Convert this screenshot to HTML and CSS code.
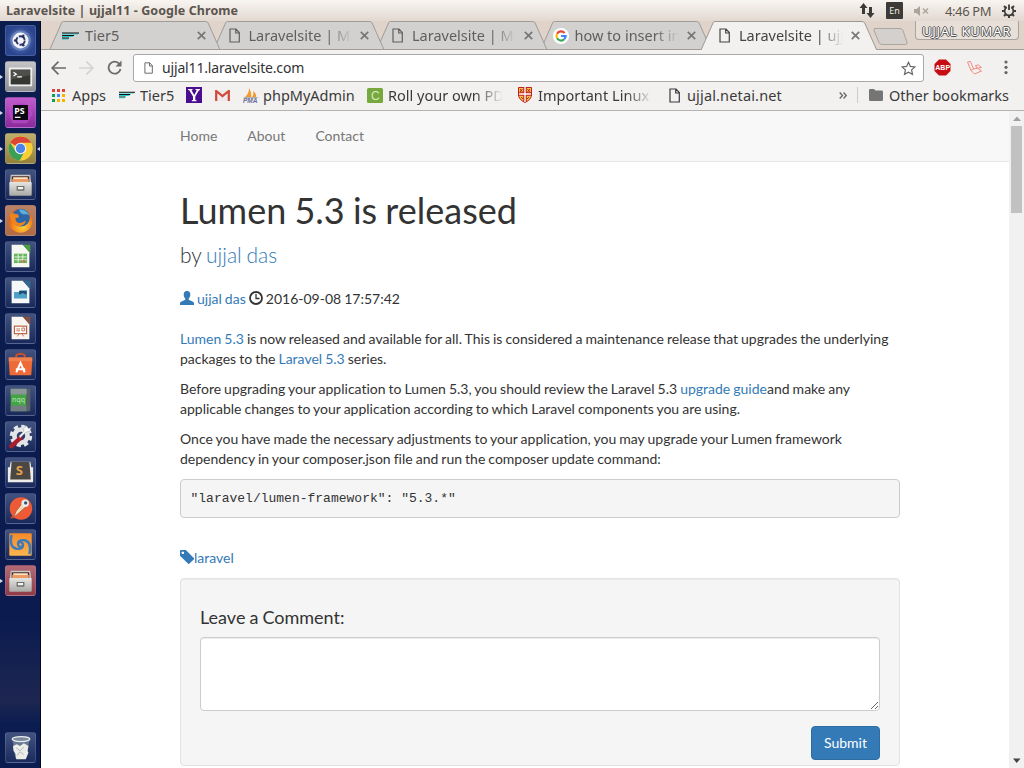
FILE: index.html
```html
<!DOCTYPE html>
<html lang="en">
<head>
<meta charset="utf-8">
<title>Laravelsite | ujjal11</title>
<link rel="stylesheet" href="styles.css">
</head>
<body>
<svg class="defs" width="0" height="0">
  <defs>
    <linearGradient id="steel" x1="0" y1="0" x2="0" y2="1"><stop offset="0" stop-color="#e4e4e2"/><stop offset="1" stop-color="#a9a9a6"/></linearGradient>
    <linearGradient id="sun" x1="0" y1="0" x2="0" y2="1"><stop offset="0" stop-color="#f58a2a"/><stop offset="1" stop-color="#fbb54e"/></linearGradient>
    <radialGradient id="fox" cx=".6" cy=".75" r=".8"><stop offset="0" stop-color="#ffd23a"/><stop offset=".5" stop-color="#f78a1c"/><stop offset="1" stop-color="#d8481a"/></radialGradient>
    <radialGradient id="neon"><stop offset="0" stop-color="#5a49e8"/><stop offset=".6" stop-color="#a32fd0"/><stop offset="1" stop-color="#c05cc4" stop-opacity=".5"/></radialGradient>
  </defs>
  <symbol id="doc" viewBox="0 0 11 15"><path d="M1 1h6l3.300 3.500V14H1zM6.700 1v4h3.600" fill="none" stroke="currentColor" stroke-width="1.200"/></symbol>
  <symbol id="tier" viewBox="0 0 17 8"><path d="M0 1.500h17l-1.500 1H0zM0 4h12l-2 1H0zM0 6.500h7l-1 1H0z" fill="#20cfd6"/><path d="M0 .5h17v1H0zM0 3h12v1H0zM0 5.500h7v1H0z" fill="#111"/></symbol>
  <symbol id="cross" viewBox="0 0 8 8"><path d="M.7.7l6.600 6.600M7.300.7L.7 7.300" stroke="currentColor" stroke-width="1.500"/></symbol>
  <symbol id="cabinet" viewBox="0 0 24 24"><path d="M2 1.500h20l1 9H1z" fill="#c9c8c6"/><path d="M3 3h18v7H3z" fill="#4d2e22"/><path d="M4.500 4h15v2h-15z" fill="#fbe3c8"/><path d="M3.500 6h17v3.500h-17z" fill="#ee9a63"/><rect x=".5" y="9" width="23" height="14" rx="1" fill="url(#steel)"/><rect x="8" y="13" width="8" height="5" rx=".5" fill="#6e6e6e"/><path d="M9.300 14.200h5.400v2.300H9.300z" fill="#f4f4f4"/></symbol>
</svg>
<div class="desktop">
  <header class="panel">
    <span class="panel-title">Laravelsite | ujjal11 - Google Chrome</span>
    <div class="indicators">
      <svg class="i-net" width="16" height="15" viewBox="0 0 16 15"><path d="M4.500 0L8.500 5H6v6H3V5H.5zM11.500 15l-4-5H10V4h3v6h2.500z" fill="#3c3b37"/></svg>
      <span class="i-lang">En</span>
      <svg class="i-sound" width="15" height="12" viewBox="0 0 15 12"><path d="M0 4h2.500L6 1v10L2.500 8H0z" fill="#aaa49b"/><path d="M9 3.500l5 5m0-5l-5 5" stroke="#aaa49b" stroke-width="1.400"/></svg>
      <span class="i-clock">4:46 PM</span>
      <svg class="i-gear" width="14" height="14" viewBox="0 0 14 14"><g stroke="#3c3b37" fill="none"><path d="M4.800 3.200a4.400 4.400 0 1 0 4.400 0" stroke-width="1.700"/><path d="M7 .5v5.500" stroke-width="1.800"/><path d="M0 7h2.500m9 0H14M7 11.500V14M2 2l1.800 1.800M12 2l-1.800 1.800M2 12l1.800-1.800M12 12l-1.800-1.800" stroke-width="2"/></g></svg>
    </div>
  </header>
  <div class="workspace">
    <aside class="launcher">
      <div class="tile t-dash"><svg viewBox="0 0 31 31"><circle cx="15.500" cy="15.500" r="11" fill="#8fa5d5" opacity=".5"/><circle cx="15.500" cy="15.500" r="8.500" fill="#f2f4fa"/><circle cx="15.500" cy="15.500" r="4.500" fill="none" stroke="#26315f" stroke-width="2" stroke-dasharray="8 1.400"/><circle cx="9.800" cy="15.500" r="1.300" fill="#26315f"/><circle cx="18.500" cy="10.500" r="1.300" fill="#26315f"/><circle cx="18.500" cy="20.500" r="1.300" fill="#26315f"/></svg></div>
      <div class="tile t-term run"><svg viewBox="0 0 31 31"><rect x="3" y="6" width="25" height="20" rx="1" fill="#eee"/><rect x="5" y="8" width="21" height="16" fill="#363632"/><path d="M5 8h21v6L5 19z" fill="#fff" opacity=".12"/><path d="M8 11l3 2-3 2M12 16h5" stroke="#fff" stroke-width="1.300" fill="none"/></svg></div>
      <div class="tile t-storm run"><svg viewBox="0 0 31 31"><path d="M5 6l20-2 3 14-6 9H7L3 16z" fill="url(#neon)"/><rect x="7.500" y="7.500" width="16" height="16" fill="#0b0710"/><text x="8.800" y="17" class="svg-ps">PS</text><path d="M9.500 20h6v1.300h-6z" fill="#fff"/></svg></div>
      <div class="tile t-chrome run focus"><svg viewBox="0 0 31 31"><circle cx="15.500" cy="15.500" r="13" fill="#f7cf35"/><path d="M15.500 15.500L4.300 9A13 13 0 0 1 26.900 9.300H15.500z" fill="#dc4637"/><path d="M4.300 9A13 13 0 0 0 14.500 28.500l5.500-10-10-.5z" fill="#3c9f57"/><circle cx="15.500" cy="15.500" r="6.200" fill="#f5f5f5"/><circle cx="15.500" cy="15.500" r="5" fill="#4a84e8"/></svg></div>
      <div class="tile"><svg viewBox="0 0 31 31"><use href="#cabinet" x="3" y="3.500" width="25" height="25"/></svg></div>
      <div class="tile t-fox run"><svg viewBox="0 0 31 31"><circle cx="15.500" cy="16" r="12.500" fill="url(#fox)"/><circle cx="16" cy="12.500" r="9.500" fill="#2c66a8"/><path d="M14 4c5-1 9 2 11 6-3-2-4-1-6-1s-4-2-5-5z" fill="#5ab0dc"/><path d="M4 9l3-2c1 2 3 1 6 2l1 3-4 1c0 4 3 6 6 5 2 0 3-2 5-2-1 5-7 7-11 4C6 18 4 14 4 9z" fill="#f0831d"/></svg></div>
      <div class="tile"><svg viewBox="0 0 31 31"><path d="M6 3h12l7 8v16H6z" fill="#f5f7f1"/><path d="M18 3h8v9z" fill="#4aa042"/><rect x="8.500" y="12.500" width="14" height="10" fill="#68b55c"/><path d="M9 16h13M9 19h13M13 13v9M18 13v9" stroke="#e9f6e4"/><path d="M16 22v-2h2v-1h2v3z" fill="#bd7d4b"/></svg></div>
      <div class="tile"><svg viewBox="0 0 31 31"><path d="M6 3h12l7 8v16H6z" fill="#f5f7f8"/><path d="M18 3h8v9z" fill="#326990"/><path d="M8.500 15h6v-2h8v9h-14z" fill="#4ea2c8"/><path d="M14 14h8v4l-4-2-4 2z" fill="#204f70"/></svg></div>
      <div class="tile"><svg viewBox="0 0 31 31"><path d="M6 3h12l7 8v16H6z" fill="#f8f4ef"/><path d="M18 3h8v9z" fill="#875142"/><rect x="9" y="13" width="13" height="8" fill="#fff" stroke="#bc6546" stroke-width="1.300"/><path d="M11 16h4m-4 2h4m2-3h3v3h-3zM14 21l-2 3m5-3l2 3" stroke="#bd7359" fill="none"/></svg></div>
      <div class="tile"><svg viewBox="0 0 31 31"><path d="M11 8V5.500q4.500-3 9 0V8" stroke="#cd502b" stroke-width="2" fill="none"/><path d="M3 8h25v4l-1 15H4L3 12z" fill="#ee6a36"/><path d="M3 8h25v4H3z" fill="#f28150"/><path d="M11 24l4.500-10L20 24M10.500 20.500h10" stroke="#fff" stroke-width="2.200" fill="none"/></svg></div>
      <div class="tile"><svg viewBox="0 0 31 31"><path d="M5 3h17v24H5z" fill="#45a246"/><path d="M22 3h4v24h-4z" fill="#56616a"/><path d="M5 3h17v6H5z" fill="#8d9699"/><path d="M5 21h17v6H5z" fill="#727c82"/><text x="6.500" y="17" class="svg-nqq">nqq</text></svg></div>
      <div class="tile"><svg viewBox="0 0 31 31"><circle cx="16" cy="15" r="10" fill="none" stroke="#e4e6e8" stroke-width="4" stroke-dasharray="4.500 3.350"/><circle cx="16" cy="15" r="7" fill="none" stroke="#e2e4e6" stroke-width="5"/><path d="M5.500 26l10-9" stroke="#ad1e2d" stroke-width="4.500" stroke-linecap="round"/><path d="M15 17l6-6 4-1 2-4-3 1-2-3-3 3v3l-5 5z" fill="#f6f7f7" stroke="#999" stroke-width=".5"/></svg></div>
      <div class="tile"><svg viewBox="0 0 31 31"><path d="M2 10h2l1-6h21l1 6h2v16H2z" fill="#ecebe8"/><path d="M6 4h19l1.500 19h-22z" fill="#4b4742"/><text x="10.500" y="18" class="svg-s">S</text></svg></div>
      <div class="tile"><svg viewBox="0 0 31 31"><circle cx="16" cy="15.500" r="12" fill="#ee5a35"/><path d="M4 26l3-3 2 3z" fill="#d5442a"/><path d="M8 25l3-7 7-9 4 4-9 8z" fill="#f1d8b6" stroke="#a9502e" stroke-width=".8"/><circle cx="20.500" cy="10" r="4" fill="#e6efee"/><circle cx="21" cy="9.500" r="1.800" fill="#38556e"/></svg></div>
      <div class="tile"><svg viewBox="0 0 31 31"><rect x="3.500" y="3.500" width="24" height="24" rx="1" fill="url(#sun)"/><g fill="none" stroke="#3f7bb9" stroke-width="2.600"><path d="M6 5q-3 13 5 15 8 1 7-5-2-4-5-1"/><path d="M25 26q3-13-5-15-8-1-7 5 2 4 5 1"/></g></svg></div>
      <div class="tile t-red run"><svg viewBox="0 0 31 31"><use href="#cabinet" x="3" y="3.500" width="25" height="25"/></svg></div>
      <div class="tile t-trash"><svg viewBox="0 0 31 31"><path d="M7 7h18l-3 20H10z" fill="#77869a" opacity=".8"/><ellipse cx="16" cy="6.500" rx="9.500" ry="2.700" fill="#7b8999" stroke="#e9edf0" stroke-width="1.300"/><path d="M7.500 14l4-2 3.500 2 4-3 5 3-1 5 1 2-3 7H11l-1-6-2-3z" fill="#ecede9"/><path d="M11 16l4 3 4-4m-7 9l3-4 4 3" stroke="#b2b6b3" fill="none"/></svg></div>
    </aside>
    <main class="browser">
      <div class="tabstrip">
        <div class="tab z4"><svg class="tab-bg" viewBox="0 0 176 29"><path d="M0 29L12 2q.5-1.500 2-1.500h147q2 0 2.700 1.500l12 27"/></svg><svg class="fav-t" width="17" height="8"><use href="#tier"/></svg><span class="tab-text">Tier5</span><svg class="close" width="9" height="9"><use href="#cross"/></svg></div>
        <div class="tab z3"><svg class="tab-bg" viewBox="0 0 176 29"><path d="M0 29L12 2q.5-1.500 2-1.500h147q2 0 2.700 1.500l12 27"/></svg><svg class="fav-d" width="11" height="15"><use href="#doc"/></svg><span class="tab-text fade">Laravelsite | Ma</span><svg class="close" width="9" height="9"><use href="#cross"/></svg></div>
        <div class="tab z2"><svg class="tab-bg" viewBox="0 0 176 29"><path d="M0 29L12 2q.5-1.500 2-1.500h147q2 0 2.700 1.500l12 27"/></svg><svg class="fav-d" width="11" height="15"><use href="#doc"/></svg><span class="tab-text fade">Laravelsite | Ma</span><svg class="close" width="9" height="9"><use href="#cross"/></svg></div>
        <div class="tab z1"><svg class="tab-bg" viewBox="0 0 176 29"><path d="M0 29L12 2q.5-1.500 2-1.500h147q2 0 2.700 1.500l12 27"/></svg><svg class="fav-g" width="16" height="16" viewBox="0 0 16 16"><circle cx="8" cy="8" r="8" fill="#fff"/><g fill="none" stroke-width="2.200"><path d="M4.100 5.700A4.600 4.600 0 0 1 11.500 5" stroke="#ea4335"/><path d="M4.100 10.300a4.600 4.600 0 0 1 0-4.600" stroke="#fbbc05"/><path d="M11.200 11.300a4.600 4.600 0 0 1-7.100-1" stroke="#34a853"/><path d="M8 8h4.600a4.600 4.600 0 0 1-1.400 3.300" stroke="#4285f4"/></g></svg><span class="tab-text fade">how to insert in</span><svg class="close" width="9" height="9"><use href="#cross"/></svg></div>
        <div class="tab active"><svg class="tab-bg" viewBox="0 0 176 29"><path d="M0 29L12 2q.5-1.500 2-1.500h147q2 0 2.700 1.500l12 27"/></svg><svg class="fav-d" width="11" height="15"><use href="#doc"/></svg><span class="tab-text fade">Laravelsite | ujj</span><svg class="close" width="9" height="9"><use href="#cross"/></svg></div>
        <svg class="newtab" width="35" height="17" viewBox="0 0 35 17"><path d="M2 .5h25q2 0 3 2l4 12q.5 2-1.500 2H9q-2 0-3-2L1 2.500Q.500.5 2 .5z" fill="#d3d0cd" stroke="#aaa5a0"/></svg>
        <span class="profile">UJJAL KUMAR</span>
      </div>
      <div class="toolbar">
        <svg class="nav-ic" width="15" height="14" viewBox="0 0 15 14"><path d="M7.500.7L1.200 7l6.300 6.300M1.200 7H15" fill="none" stroke="#6b6b6b" stroke-width="1.700"/></svg>
        <svg class="nav-ic" width="15" height="14" viewBox="0 0 15 14"><path d="M7.500.7L13.800 7l-6.300 6.300M13.800 7H0" fill="none" stroke="#d3d3d3" stroke-width="1.700"/></svg>
        <svg class="nav-ic" width="15" height="15" viewBox="0 0 15 15"><path d="M12.400 4A6 6 0 1 0 13.500 9" fill="none" stroke="#6b6b6b" stroke-width="1.800"/><path d="M14.500.5v6H8.500z" fill="#6b6b6b"/></svg>
        <div class="omnibox"><svg class="omni-doc" width="9" height="12"><use href="#doc"/></svg><span class="url">ujjal11.laravelsite.com</span><svg class="star" width="15" height="15" viewBox="0 0 15 15"><path d="M7.500 1.300l1.900 4.100 4.500.5-3.300 3 .9 4.500-4-2.200-4 2.200.9-4.500-3.300-3 4.500-.5z" fill="none" stroke="#666" stroke-width="1.200"/></svg></div>
        <svg class="abp" width="17" height="17" viewBox="0 0 17 17"><path d="M5 .5h7l4.500 4.500v7L12 16.500H5L.5 12V5z" fill="#c70d12"/><text x="1.300" y="11.300" class="svg-abp">ABP</text></svg>
        <svg class="lara" width="17" height="14" viewBox="0 0 17 14"><path d="M1.500 1l3-.6L7.500 8 5 9.500zM5 9.500L8.500 13 15.500 10M7.500 8l4-.8 4 2.800M11 7.200L9.500 4.500l3-.5 3 2.500-4 .7" fill="none" stroke="#f28a80"/></svg>
        <svg class="menu" width="4" height="15" viewBox="0 0 4 15"><g fill="#666"><circle cx="2" cy="2" r="1.600"/><circle cx="2" cy="7.300" r="1.600"/><circle cx="2" cy="12.600" r="1.600"/></g></svg>
      </div>
      <div class="bookmarks">
        <svg class="b-apps" width="13" height="13" viewBox="0 0 13 13"><path d="M0 0h3v3H0zM5 0h3v3H5zM10 0h3v3h-3z" fill="#db4437"/><path d="M0 5h3v3H0z" fill="#0f9d58"/><path d="M5 5h3v3H5z" fill="#4285f4"/><path d="M10 5h3v3h-3zM5 10h3v3H5zM10 10h3v3h-3z" fill="#f4b400"/><path d="M0 10h3v3H0z" fill="#0f9d58"/></svg>
        <span class="bm w-apps">Apps</span>
        <svg class="b-tier" width="16" height="8"><use href="#tier"/></svg>
        <span class="bm w-tier">Tier5</span>
        <svg class="b-y" width="16" height="16" viewBox="0 0 16 16"><path d="M0 0h16v16H0z" fill="#4a0c90"/><path d="M2 2h4.500v1l-1 .2L8.300 8l2.500-4.800L9.500 3V2H14v1l-1.200.4L9.300 9.500V13l1.200.3v.9H5.800v-.9L7 13V9.500L3.200 3.300 2 3z" fill="#fff"/></svg>
        <svg class="b-mail" width="15" height="11" viewBox="0 0 15 11"><path d="M0 0h15v11H0z" fill="#eceaea"/><path d="M1.200 11V1l6.300 5 6.300-5v10" fill="none" stroke="#d14836" stroke-width="2.200"/></svg>
        <svg class="b-pma" width="16" height="15" viewBox="0 0 16 15"><path d="M6 0q3 5 2 9H2q4-3 4-9zM10 3q4 3 3 6H9q2-2 1-6z" fill="#f29b2c"/><path d="M0 9.500h16l-3 .8H3z" fill="#777"/><text x="0" y="15" class="svg-pma">PMA</text></svg>
        <span class="bm w-php">phpMyAdmin</span>
        <svg class="b-c" width="16" height="15" viewBox="0 0 16 15"><rect width="16" height="15" rx="1.500" fill="#76a83d"/><text x="4" y="12" class="svg-c">C</text></svg>
        <span class="bm w-roll fade">Roll your own PD</span>
        <svg class="b-shield" width="14" height="16" viewBox="0 0 14 16"><path d="M.5.5h13v7q0 5-6.500 8Q.5 12.500.5 7.500z" fill="#f5c842" stroke="#c02020"/><path d="M7 0v15M0 7h14" stroke="#c02020" stroke-width="3.500"/><path d="M7 0v15M1 7h12" stroke="#fff" stroke-width="1.400"/><path d="M2 2l2.500 3M4.500 2L2 5m7.500-3L12 5m0-3L9.500 5M3 10l2 2m6-2l-2 2" stroke="#c02020"/></svg>
        <span class="bm w-linux fade">Important Linux</span>
        <svg class="b-doc" width="11" height="15"><use href="#doc"/></svg>
        <span class="bm w-net">ujjal.netai.net</span>
        <svg class="b-more" width="8" height="7" viewBox="0 0 8 7"><path d="M.7.500l2.800 3-2.800 3M4.500.500l2.800 3-2.800 3" fill="none" stroke="#666" stroke-width="1.300"/></svg>
        <i class="b-sep"></i>
        <svg class="b-folder" width="14" height="12" viewBox="0 0 14 12"><path d="M0 1.300Q0 0 1.300 0H5l1.500 1.600h6.200Q14 1.600 14 3v7.700q0 1.300-1.300 1.300H1.300Q0 12 0 10.700z" fill="#757575"/></svg>
        <span class="bm w-other">Other bookmarks</span>
      </div>
      <div class="viewport">
        <div class="page">
          <nav class="navbar"><div class="container nav-links"><a>Home</a><a>About</a><a>Contact</a></div></nav>
          <article class="container post">
            <h1>Lumen 5.3 is released</h1>
            <p class="lead">by <a>ujjal das</a></p>
            <p class="meta"><a><svg class="glyph g-user" width="14" height="14" viewBox="0 0 14 14"><path d="M7 0c2.300 0 3.500 1.500 3.300 3.800-.1 1.900-.8 3-1.600 4v1l4.300 2c.7.400 1 1 1 2V14H0v-1.200c0-1 .3-1.600 1-2l4.300-2v-1c-.8-1-1.500-2.100-1.600-4C3.500 1.500 4.700 0 7 0z" fill="#337ab7"/></svg> ujjal das</a> <svg class="glyph" width="14" height="14" viewBox="0 0 14 14"><circle cx="7" cy="7" r="6" fill="none" stroke="#333" stroke-width="1.800"/><path d="M7 3v4.500h3.500" fill="none" stroke="#333" stroke-width="1.300"/></svg> 2016-09-08 17:57:42</p>
            <p class="first"><a>Lumen 5.3</a> is now released and available for all. This is considered a maintenance release that upgrades the underlying packages to the <a>Laravel 5.3</a> series.</p>
            <p>Before upgrading your application to Lumen 5.3, you should review the Laravel 5.3 <a>upgrade guide</a>and make any applicable changes to your application according to which Laravel components you are using.</p>
            <p>Once you have made the necessary adjustments to your application, you may upgrade your Lumen framework dependency in your composer.json file and run the composer update command:</p>
            <pre>"laravel/lumen-framework": "5.3.*"</pre>
            <p class="tags"><a><svg class="glyph" width="14" height="14" viewBox="0 0 14 14"><path fill-rule="evenodd" d="M0 .8Q0 0 .8 0h5L14 8.200q.3.500 0 1L9.200 13.800q-.500.400-1 0L0 5.800zM2.800 1.500a1.300 1.300 0 1 0 .01 0z" fill="#337ab7"/></svg>laravel</a></p>
            <form class="well">
              <h4>Leave a Comment:</h4>
              <textarea aria-label="Comment"></textarea>
              <button type="button">Submit</button>
            </form>
          </article>
        </div>
        <div class="scrollbar"><svg width="15" height="15"><path d="M4 10h8L8 5.500z" fill="#a0a0a0"/></svg><div class="thumb"></div><svg class="down" width="15" height="15"><path d="M4 5.500h7.500L7.700 10z" fill="#444"/></svg></div>
      </div>
    </main>
  </div>
</div>
</body>
</html>
```
FILE: styles.css
```css
* { box-sizing: border-box; }
body { margin: 0; width: 1024px; height: 768px; overflow: hidden; font-family: "Noto Sans", "Open Sans", sans-serif; background: #fff; }
.defs { position: absolute; }
svg { display: block; flex: none; }
.desktop { display: flex; flex-direction: column; height: 768px; }

/* top panel */
.panel { flex: none; height: 21px; display: flex; align-items: center; justify-content: space-between; padding: 0 8px 0 6px; background: linear-gradient(#f8f5f1, #e2d8d0); color: #5b554e; }
.panel-title { font-weight: 700; font-size: 12.5px; letter-spacing: .07px; white-space: nowrap; }
.indicators { display: flex; align-items: center; }
.i-lang { width: 17px; height: 17px; margin-left: 11px; background: #3c3b37; border-radius: 1px; color: #f0ece6; font-size: 9px; line-height: 17px; text-align: center; }
.i-sound { margin-left: 11px; }
.i-clock { margin-left: 16px; width: 47px; font-size: 13px; letter-spacing: -.4px; white-space: nowrap; }
.i-gear { margin-left: 10px; }

/* launcher */
.workspace { flex: 1; min-height: 0; display: flex; }
.launcher { flex: none; width: 41px; display: flex; flex-direction: column; gap: 5px; padding: 4px 0 5px 4.5px; background: linear-gradient(#0b1d4c, #0b1b50 80%, #1d2650 91%, #0b1d50 94%); border-right: 1px solid #05091c; }
.tile { position: relative; flex: none; width: 31px; height: 31px; border-radius: 3px; border: 1px solid rgba(150,165,205,.25); background: linear-gradient(rgba(150,165,200,.4), rgba(70,85,130,.25)); }
.tile svg { width: 29px; height: 29px; }
.t-dash { background: radial-gradient(#7189c4, #2b468f 70%); }
.t-term { background: linear-gradient(#c4c4c6, #8d8e91); }
.t-storm { background: linear-gradient(#c25ccc, #8a2a9c); }
.t-chrome { background: linear-gradient(#bfae6c, #94803a); }
.t-fox { background: linear-gradient(#b98266, #b36b42); }
.t-red { background: linear-gradient(#b26a76, #923a48); }
.t-trash { margin-top: auto; }
.run::before, .focus::after { content: ""; position: absolute; top: 13px; left: -6px; border: 2px solid transparent; border-left: 3px solid #d6dcee; }
.focus::after { left: auto; right: -5px; border-left: 0; border-right: 3px solid #d6dcee; }
.svg-ps { font: 700 9.500px "Noto Sans", sans-serif; fill: #fff; }
.svg-nqq { font: 7.500px "Noto Sans", sans-serif; fill: #b9e8b6; }
.svg-s { font: 700 14px "Noto Sans", sans-serif; fill: #e7a14d; }
.svg-abp { font: 700 7px "Liberation Sans", sans-serif; fill: #fff; }
.svg-pma { font: italic 700 6.500px "Liberation Sans", sans-serif; fill: #6b6f9c; }
.svg-c { font: 12px "Liberation Sans", sans-serif; fill: #d8eabf; }

/* tab strip */
.browser { flex: 1; min-width: 0; display: flex; flex-direction: column; background: #f2f1f0; }
.tabstrip { position: relative; flex: none; height: 29px; display: flex; padding-left: 6px; background: #dfd3ca; border-bottom: 1px solid #a19d99; }
.tab { position: relative; flex: none; width: 176px; height: 29px; margin-right: -12.500px; display: flex; align-items: center; padding: 0 17.500px 0 15px; color: #5f5f5f; }
.z4 { z-index: 4; } .z3 { z-index: 3; } .z2 { z-index: 2; } .z1 { z-index: 1; }
.active { z-index: 5; color: #444; }
.tab-bg { position: absolute; left: 0; top: 0; width: 176px; height: 29px; }
.tab-bg path { fill: #d3d1cf; stroke: #9c9995; stroke-width: 1; }
.z4 .tab-bg, .z3 .tab-bg, .z2 .tab-bg, .z1 .tab-bg { height: 28px; }
.active .tab-bg path { fill: #f2f1f0; }
.tab-text { z-index: 1; flex: 1; min-width: 0; margin-bottom: 1px; overflow: hidden; white-space: nowrap; font-size: 14.500px; line-height: 20px; }
.fav-d, .fav-t, .fav-g, .close { z-index: 1; }
.fav-d { margin: 0 9px 0 3px; }
.fav-t { margin-right: 6px; }
.fav-g { margin-right: 6px; }
.close { margin-left: 8px; color: #777; }
.fade { -webkit-mask-image: linear-gradient(90deg, #000 76%, transparent 100%); mask-image: linear-gradient(90deg, #000 76%, transparent 100%); }
.newtab { margin: 7px 0 0 8px; }
.profile { margin: 0 0 0 7px; width: 104px; height: 19px; border: 1px solid #a9a49f; border-top: 0; border-radius: 0 0 4px 4px; background: #e7dfd8; color: #fff; font-size: 13px; letter-spacing: .75px; line-height: 21px; text-align: center; white-space: nowrap; text-shadow: 1px 0 #555, -1px 0 #555, 0 1px #555, 0 -1px #555; }

/* toolbar */
.toolbar { flex: none; height: 35px; display: flex; align-items: center; padding: 0 16px 0 10px; }
.nav-ic { margin-right: 13px; }
.omnibox { width: 791px; height: 28px; margin: 1px 0 0 -2px; display: flex; align-items: center; padding: 0 7px 0 10px; background: #fff; border: 1px solid #a8a8a8; border-radius: 3px; }
.omni-doc { color: #666; }
.url { flex: 1; margin: 0 0 2px 9px; font-size: 14px; letter-spacing: -.16px; color: #333; white-space: nowrap; }
.abp { margin-left: 10px; }
.lara { margin-left: 15px; }
.menu { margin-left: auto; }

/* bookmarks bar */
.bookmarks { flex: none; height: 26px; display: flex; align-items: center; padding: 0 0 5px 11px; border-bottom: 1px solid #b5b3b0; color: #3a3a3a; }
.bm { flex: none; margin-left: 7px; overflow: hidden; white-space: nowrap; font-size: 14.500px; line-height: 20px; }
.w-apps { width: 35px; }
.b-tier { margin-left: 12px; }
.w-tier { width: 37px; margin-left: 5px; }
.b-y { margin-left: 9px; }
.b-mail { margin-left: 13px; }
.b-pma { margin-left: 13px; }
.w-php { width: 93px; margin-left: 4px; }
.b-c { margin-left: 11px; }
.w-roll { width: 115px; margin-left: 5px; }
.b-shield { margin-left: 15px; }
.w-linux { width: 115px; margin-left: 6px; letter-spacing: .05px; }
.b-doc { margin-left: 16px; }
.w-net { width: 98px; letter-spacing: .15px; }
.b-more { margin-left: 54px; }
.b-sep { width: 1px; height: 16px; margin-left: 10px; background: #ccc; }
.b-folder { margin-left: 11px; }
.w-other { width: 123px; margin-left: 6px; }

/* page */
.viewport { flex: 1; min-height: 0; display: flex; background: #fff; }
.page { flex: 1; overflow: hidden; font: 14px/20px Lato, sans-serif; font-variant-ligatures: none; word-spacing: -.55px; color: #333; }
.container { width: 720px; margin-left: 139px; }
.navbar { height: 51px; background: #f8f8f8; border-bottom: 1px solid #e7e7e7; }
.nav-links { display: flex; gap: 30px; padding-top: 15px; }
.nav-links a { color: #777; }
.post { padding-top: 29px; }
.post a { color: #337ab7; }
h1 { margin: 0 0 9px; font-size: 36px; line-height: 39.600px; font-weight: 400; word-spacing: -1px; }
p { margin: 0 0 10px; }
.lead { margin-bottom: 20px; font-size: 21px; line-height: 29.400px; font-weight: 300; word-spacing: -1px; }
.meta { margin-bottom: 20px; }
.glyph { display: inline-block; vertical-align: -1px; }
pre { margin: 0 0 29.500px; padding: 9.500px; height: 39px; font: 13px/18.570px "Liberation Mono", monospace; word-spacing: 0; background: #f5f5f5; border: 1px solid #ccc; border-radius: 4px; }
.tags { margin-bottom: 10px; }
.well { height: 188px; padding: 19px; display: flex; flex-direction: column; background: #f5f5f5; border: 1px solid #e3e3e3; border-radius: 4px; box-shadow: inset 0 1px 1px rgba(0,0,0,.05); }
h4 { margin: 9px 0 10px; font-size: 18px; line-height: 20px; font-weight: 400; }
textarea { flex: none; width: 680px; height: 74px; margin: 0 0 15px; background: #fff; border: 1px solid #ccc; border-radius: 4px; box-shadow: inset 0 1px 1px rgba(0,0,0,.075); }
button { flex: none; align-self: flex-end; width: 69px; height: 34px; padding: 0; font: 14px/20px Lato, sans-serif; color: #fff; background: #337ab7; border: 1px solid #2e6da4; border-radius: 4px; }
.scrollbar { flex: none; width: 15px; display: flex; flex-direction: column; background: #f1f1f1; }
.thumb { width: 11px; height: 87px; margin-left: 2px; background: #c1c1c1; }
.down { margin-top: auto; }
```
